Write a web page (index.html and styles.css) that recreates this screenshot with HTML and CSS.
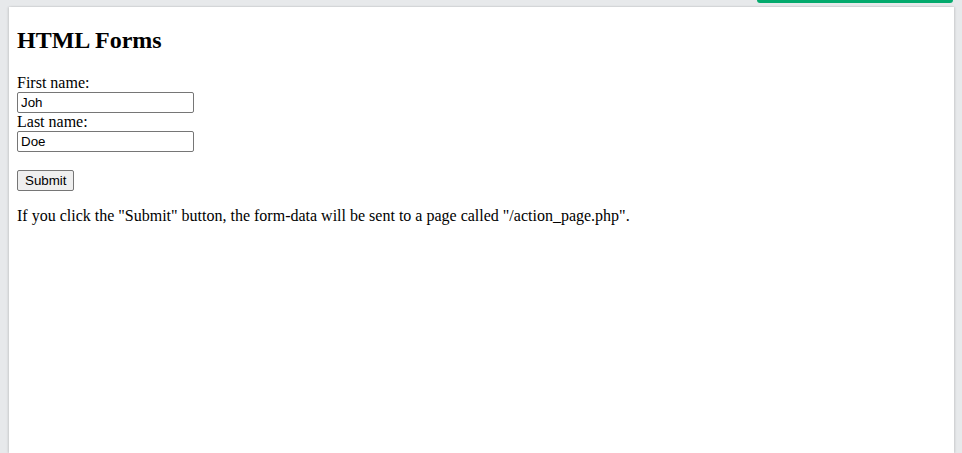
FILE: index.html
```html
<!DOCTYPE html>
<html>
<head>
<meta charset="utf-8">
<link rel="stylesheet" href="styles.css">
</head>
<body>
<div class="topbar"><div class="green-tab"></div></div>
<div class="panel">
  <h2 class="title">HTML Forms</h2>
  <form class="form" action="/action_page.php">
    <label class="label" for="fname">First name:</label><br>
    <input class="field" type="text" id="fname" name="fname" value="Joh"><br>
    <label class="label" for="lname">Last name:</label><br>
    <input class="field" type="text" id="lname" name="lname" value="Doe"><br><br>
    <input class="submit" type="submit" value="Submit">
  </form>
  <p class="note">If you click the "Submit" button, the form-data will be sent to a page called "/action_page.php".</p>
</div>
</body>
</html>
```
FILE: styles.css
```css
html, body {
  margin: 0;
  padding: 0;
  height: 100%;
}
body {
  background: #e7e9eb;
  overflow: hidden;
  font-family: "Liberation Serif", "Times New Roman", serif;
  font-size: 16px;
  color: #000;
}
.topbar {
  display: flex;
  justify-content: flex-end;
  height: 7px;
  padding-right: 9px;
}
.green-tab {
  width: 196px;
  height: 3px;
  background: #04aa6d;
  border-radius: 0 0 4px 4px;
}
.panel {
  margin-left: 9px;
  width: 945px;
  height: 446px;
  background: #fff;
  box-shadow: -1px 0 2px rgba(0,0,0,0.12), 1px 0 2px rgba(0,0,0,0.12);
  padding: 8px;
  box-sizing: border-box;
  overflow: hidden;
}
.title {
  font-size: 24px;
  font-weight: bold;
  margin: 12px 0 20px;
}
.form {
  margin: 0;
}
.field {
  font-family: "Liberation Sans", Arial, sans-serif;
  font-size: 13.333px;
  width: 177px;
  height: 21px;
  box-sizing: border-box;
  border: 1px solid #767676;
  border-radius: 2px;
  padding: 1px 3px;
  margin: 0;
}
.submit {
  font-family: "Liberation Sans", Arial, sans-serif;
  font-size: 13.333px;
  height: 21px;
  margin: 0;
  padding: 1px 7px;
  background: #efefef;
  border: 1px solid #767676;
  border-radius: 2px;
}
.note {
  margin: 16px 0;
}
```
